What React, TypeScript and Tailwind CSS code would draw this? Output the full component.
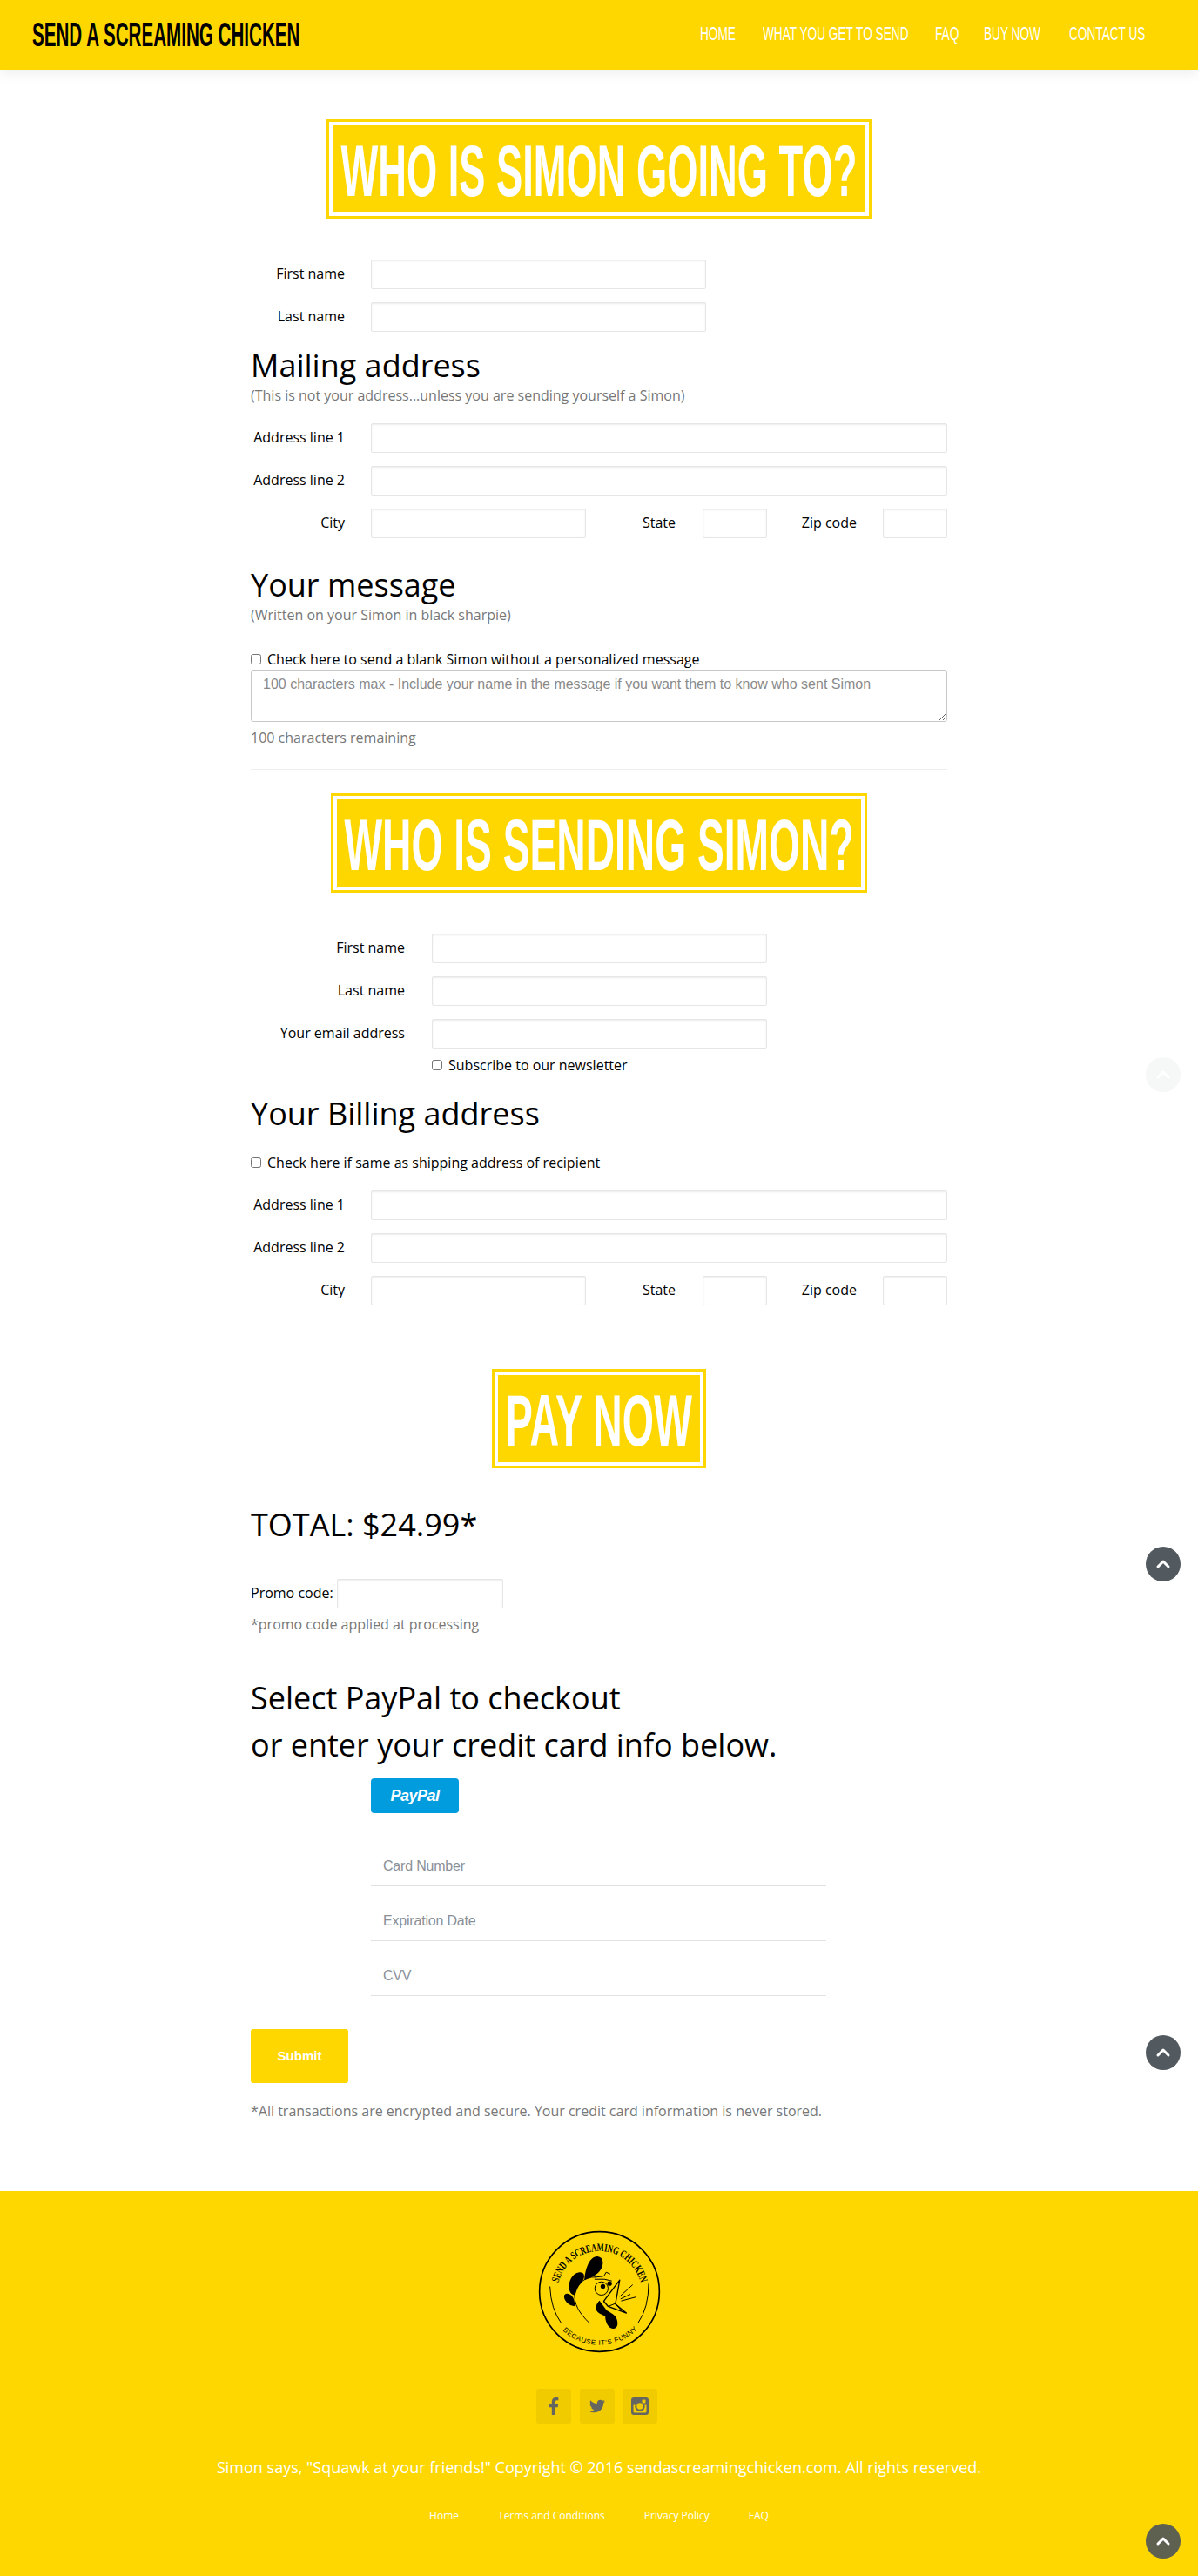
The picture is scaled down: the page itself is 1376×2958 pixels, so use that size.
import React from 'react';
import { ChevronUp } from 'lucide-react';
import { FaFacebookF, FaTwitter } from 'react-icons/fa';

const inputCls =
  'h-[34px] border border-[#e6e6e6] rounded-[2px] bg-white shadow-[inset_0_1px_2px_rgba(0,0,0,0.08)] outline-none';
const headingCls = "h-10 leading-10 text-[36px] text-black font-['Open_Sans',sans-serif] whitespace-nowrap";
const subCls = 'h-6 leading-6 text-base text-[#777]';
const checkRowCls = 'h-6 flex items-center gap-[7px] text-base text-black';

function Banner({ title, width, scale }: { title: string; width: string; scale: string }) {
  return (
    <div className={`${width} mx-auto h-[114px] border-[3px] border-[#ffd700] p-1`}>
      <div className="h-full bg-[#ffd700] flex items-center justify-center pt-1">
        <span
          className={`${scale} inline-block shrink-0 whitespace-nowrap font-['Liberation_Sans',sans-serif] font-bold text-[84px] leading-none text-white`}
        >
          {title}
        </span>
      </div>
    </div>
  );
}

function Field({ label, labelW, inputW }: { label: string; labelW: string; inputW: string }) {
  return (
    <div className="flex items-center">
      <label className={`${labelW} text-right text-base text-black shrink-0 -mt-[2px]`}>{label}</label>
      <input className={`${inputW} ${inputCls}`} />
    </div>
  );
}

function AddressFields() {
  return (
    <div className="flex flex-col gap-[15px]">
      <Field label="Address line 1" labelW="w-[108px] mr-[30px]" inputW="w-[662px]" />
      <Field label="Address line 2" labelW="w-[108px] mr-[30px]" inputW="w-[662px]" />
      <div className="flex items-center text-base text-black">
        <label className="w-[108px] mr-[30px] text-right -mt-[2px]">City</label>
        <input className={`w-[247px] ${inputCls}`} />
        <label className="w-[103px] mr-[31px] text-right -mt-[2px]">State</label>
        <input className={`w-[74px] ${inputCls}`} />
        <label className="w-[103px] mr-[30px] text-right -mt-[2px]">Zip code</label>
        <input className={`w-[74px] ${inputCls}`} />
      </div>
    </div>
  );
}

function CardField({ placeholder }: { placeholder: string }) {
  return (
    <div className="h-[63px] border-b border-[#e0e2e5] flex items-center pt-[18px]">
      <input
        placeholder={placeholder}
        className="w-full pl-[14px] outline-none text-base font-['Liberation_Sans',sans-serif] font-light placeholder:text-[#8b9097] tracking-[-0.2px]"
      />
    </div>
  );
}

function ScrollTop({ top, tone }: { top: string; tone: string }) {
  return (
    <div className={`${top} ${tone} absolute right-5 w-10 h-10 rounded-full flex items-center justify-center`}>
      <ChevronUp size={24} strokeWidth={3} className="text-white" />
    </div>
  );
}

function Logo() {
  return (
    <svg viewBox="170 60 430 430" className="w-[143px] h-[143px] mx-auto block">
      <defs>
        <path id="topArc" d="M 243 244 A 147 147 0 0 1 527 244" />
        <path id="botArc" d="M 258 409 A 185 185 0 0 0 515 406" />
      </defs>
      <circle cx="385" cy="275" r="207" fill="none" stroke="#000" strokeWidth="5" />
      <path d="M 214 257 Q 217 335 254 385" fill="none" stroke="#000" strokeWidth="3" />
      <path d="M 555 247 Q 555 330 519 382" fill="none" stroke="#000" strokeWidth="3" />
      <text fontFamily="'Liberation Serif',serif" fontWeight="700" fontSize="38" fill="#000">
        <textPath href="#topArc" textLength="385" lengthAdjust="spacingAndGlyphs">
          SEND A SCREAMING CHICKEN
        </textPath>
      </text>
      <text fontFamily="'Liberation Sans',sans-serif" fontSize="24" fill="#000">
        <textPath href="#botArc" textLength="285">
          BECAUSE IT'S FUNNY
        </textPath>
      </text>
      {/* comb */}
      <path d="M 333 235 C 335 200 350 152 378 153 C 402 155 402 185 385 205 C 370 222 352 228 333 235 Z" />
      <path d="M 301 288 C 275 285 275 245 290 225 C 300 208 325 202 331 215 C 335 225 330 235 322 245 C 310 258 305 272 301 288 Z" />
      <path d="M 301 325 C 278 325 262 305 263 290 C 265 278 280 280 290 290 C 298 300 300 312 301 325 Z" />
      {/* head */}
      <path d="M 352 385 C 315 350 295 315 300 280 C 305 250 335 222 372 225" fill="none" stroke="#000" strokeWidth="3" />
      <path d="M 370 225 L 398 222 M 400 222 L 408 208 L 422 214" fill="none" stroke="#000" strokeWidth="3" />
      {/* eyes */}
      <circle cx="392" cy="264" r="23" fill="#ffd700" stroke="#000" strokeWidth="3" />
      <circle cx="397" cy="257" r="8" />
      <circle cx="420" cy="247" r="8" />
      <path d="M 368 232 L 402 232 L 428 238" fill="none" stroke="#000" strokeWidth="3" />
      {/* wattle */}
      <path d="M 385 306 C 370 322 368 340 385 350 L 405 360 C 405 385 420 405 435 403 C 452 400 450 375 440 360 C 430 350 418 345 410 340 Z" />
      {/* beak */}
      <path d="M 455 235 L 400 308 L 415 326 L 478 349 L 440 318 Z" fill="#ffd700" stroke="#000" strokeWidth="4" strokeLinejoin="round" />
      <path d="M 415 326 L 440 316 L 462 342" fill="none" stroke="#000" strokeWidth="3" />
      <path d="M 455 292 L 500 251 M 458 300 L 492 284 M 460 307 L 513 293" fill="none" stroke="#000" strokeWidth="3" />
    </svg>
  );
}

function InstagramIcon() {
  return (
    <svg viewBox="0 0 20 20" className="w-5 h-5" fill="#666660">
      <path
        fillRule="evenodd"
        d="M3 0h14a3 3 0 0 1 3 3v14a3 3 0 0 1-3 3H3a3 3 0 0 1-3-3V3a3 3 0 0 1 3-3zm10.5 2.5a1 1 0 0 0-1 1v2a1 1 0 0 0 1 1h2a1 1 0 0 0 1-1v-2a1 1 0 0 0-1-1h-2zM2.5 8.5V16a1.5 1.5 0 0 0 1.5 1.5h12a1.5 1.5 0 0 0 1.5-1.5V8.5h-2.1a5.7 5.7 0 1 1-10.8 0H2.5zM10 6.3a3.7 3.7 0 1 0 0 7.4 3.7 3.7 0 0 0 0-7.4z"
      />
    </svg>
  );
}

const navItems = [
  { label: 'HOME', width: 'w-[42px]' },
  { label: 'WHAT YOU GET TO SEND', width: 'w-[168px]' },
  { label: 'FAQ', width: 'w-[26px]' },
  { label: 'BUY NOW', width: 'w-[68px]' },
  { label: 'CONTACT US', width: 'w-[89px]' },
];

export default function App() {
  return (
    <div className="relative w-full min-h-[2958px] bg-white font-['Open_Sans',sans-serif] overflow-hidden">
      <header className="h-20 bg-[#ffd700] shadow-[0_4px_14px_rgba(0,0,0,0.07)] flex items-center justify-between pl-[37px] pr-[59px]">
        <div className="w-[307px]">
          <span className="inline-block origin-left scale-x-[0.542] whitespace-nowrap font-['Liberation_Sans',sans-serif] font-bold text-[38px] leading-none text-black">
            SEND A SCREAMING CHICKEN
          </span>
        </div>
        <nav className="flex gap-[30px]">
          {navItems.map((item) => (
            <a key={item.label} className={`${item.width} block`}>
              <span className="inline-block origin-left scale-x-[0.62] whitespace-nowrap font-['Liberation_Sans',sans-serif] text-[22px] leading-none text-white">
                {item.label}
              </span>
            </a>
          ))}
        </nav>
      </header>

      <main className="w-[800px] mx-auto pb-20">
        <div className="pt-[57px]">
          <Banner title="WHO IS SIMON GOING TO?" width="w-[626px]" scale="scale-x-[0.539]" />
        </div>

        <div className="mt-[47px] flex flex-col gap-[15px]">
          <Field label="First name" labelW="w-[108px] mr-[30px]" inputW="w-[385px]" />
          <Field label="Last name" labelW="w-[108px] mr-[30px]" inputW="w-[385px]" />
        </div>

        <h2 className={`mt-[19px] ${headingCls}`}>Mailing address</h2>
        <p className={`mt-[2px] ${subCls}`}>(This is not your address...unless you are sending yourself a Simon)</p>
        <div className="mt-5">
          <AddressFields />
        </div>

        <h2 className={`mt-[34px] ${headingCls}`}>Your message</h2>
        <p className={`mt-[2px] ${subCls}`}>(Written on your Simon in black sharpie)</p>
        <label className={`mt-[27px] ${checkRowCls}`}>
          <input type="checkbox" className="w-3 h-3" />
          Check here to send a blank Simon without a personalized message
        </label>
        <textarea
          className="block w-full h-[60px] border border-[#c8c8c8] rounded-[3px] px-[13px] py-1 text-base font-['Liberation_Sans',sans-serif] outline-none placeholder:text-[#8a8a8a]"
          placeholder="100 characters max - Include your name in the message if you want them to know who sent Simon"
        />
        <p className="mt-[6px] h-6 leading-6 text-base text-[#777]">100 characters remaining</p>
        <hr className="mt-6 border-t border-[#eeeeee]" />

        <div className="mt-[27px]">
          <Banner title="WHO IS SENDING SIMON?" width="w-[616px]" scale="scale-x-[0.55]" />
        </div>

        <div className="mt-[47px] flex flex-col gap-[15px]">
          <Field label="First name" labelW="w-[177px] mr-[31px]" inputW="w-[385px]" />
          <Field label="Last name" labelW="w-[177px] mr-[31px]" inputW="w-[385px]" />
          <Field label="Your email address" labelW="w-[177px] mr-[31px]" inputW="w-[385px]" />
        </div>
        <label className={`mt-[7px] ml-[208px] ${checkRowCls}`}>
          <input type="checkbox" className="w-3 h-3" />
          Subscribe to our newsletter
        </label>

        <h2 className={`mt-6 ${headingCls}`}>Your Billing address</h2>
        <label className={`mt-6 ${checkRowCls}`}>
          <input type="checkbox" className="w-3 h-3" />
          Check here if same as shipping address of recipient
        </label>
        <div className="mt-5">
          <AddressFields />
        </div>
        <hr className="mt-[45px] border-t border-[#eeeeee]" />

        <div className="mt-[27px]">
          <Banner title="PAY NOW" width="w-[246px]" scale="scale-x-[0.555]" />
        </div>

        <h2 className={`mt-[45px] ${headingCls}`}>TOTAL: $24.99*</h2>
        <div className="mt-[42px] flex items-center text-base text-black">
          <label className="w-[99px] -mt-[2px]">Promo code:</label>
          <input className={`w-[191px] ${inputCls}`} />
        </div>
        <p className="mt-[6px] h-6 leading-6 text-base text-[#777]">*promo code applied at processing</p>

        <h2 className="mt-[46px] text-[36px] leading-[54px] text-black whitespace-nowrap">
          Select PayPal to checkout
          <br />
          or enter your credit card info below.
        </h2>

        <div className="mt-[11px] ml-[138px] w-[523px]">
          <button className="w-[101px] h-10 rounded-[4px] bg-[#009cde] text-white italic font-bold text-[18px] font-['Liberation_Sans',sans-serif] tracking-[-0.5px]">
            PayPal
          </button>
          <div className="mt-5 border-t border-[#e0e2e5]" />
          <CardField placeholder="Card Number" />
          <CardField placeholder="Expiration Date" />
          <CardField placeholder="CVV" />
        </div>

        <button className="mt-[38px] block w-28 h-[62px] rounded-[3px] bg-[#ffd700] text-white font-bold text-[15px] font-['Liberation_Sans',sans-serif]">
          Submit
        </button>
        <p className="mt-5 h-6 leading-6 text-base text-[#777]">
          *All transactions are encrypted and secure. Your credit card information is never stored.
        </p>
      </main>

      <footer className="h-[442px] bg-[#ffd700] pt-11">
        <Logo />
        <div className="mt-10 ml-[616px] flex">
          <a className="w-10 h-10 rounded-[3px] bg-[#f0cb00] flex items-center justify-center text-[#666660] mr-[10px]">
            <FaFacebookF size={20} />
          </a>
          <a className="w-10 h-10 rounded-[3px] bg-[#f0cb00] flex items-center justify-center text-[#666660] mr-[9px]">
            <FaTwitter size={18} />
          </a>
          <a className="w-10 h-10 rounded-[3px] bg-[#f0cb00] flex items-center justify-center">
            <InstagramIcon />
          </a>
        </div>
        <p className="mt-[38px] h-6 leading-6 text-center text-lg text-white">
          Simon says, "Squawk at your friends!" Copyright © 2016 sendascreamingchicken.com. All rights reserved.
        </p>
        <div className="mt-[34px] h-5 flex justify-center gap-[45px] text-xs leading-5 text-white">
          <a>Home</a>
          <a>Terms and Conditions</a>
          <a>Privacy Policy</a>
          <a>FAQ</a>
        </div>
      </footer>

      <ScrollTop top="top-[1214px]" tone="bg-[#525a60]/5" />
      <ScrollTop top="top-[1776px]" tone="bg-[#525a60]" />
      <ScrollTop top="top-[2337px]" tone="bg-[#525a60]" />
      <ScrollTop top="top-[2898px]" tone="bg-[#5f6150]" />
    </div>
  );
}
